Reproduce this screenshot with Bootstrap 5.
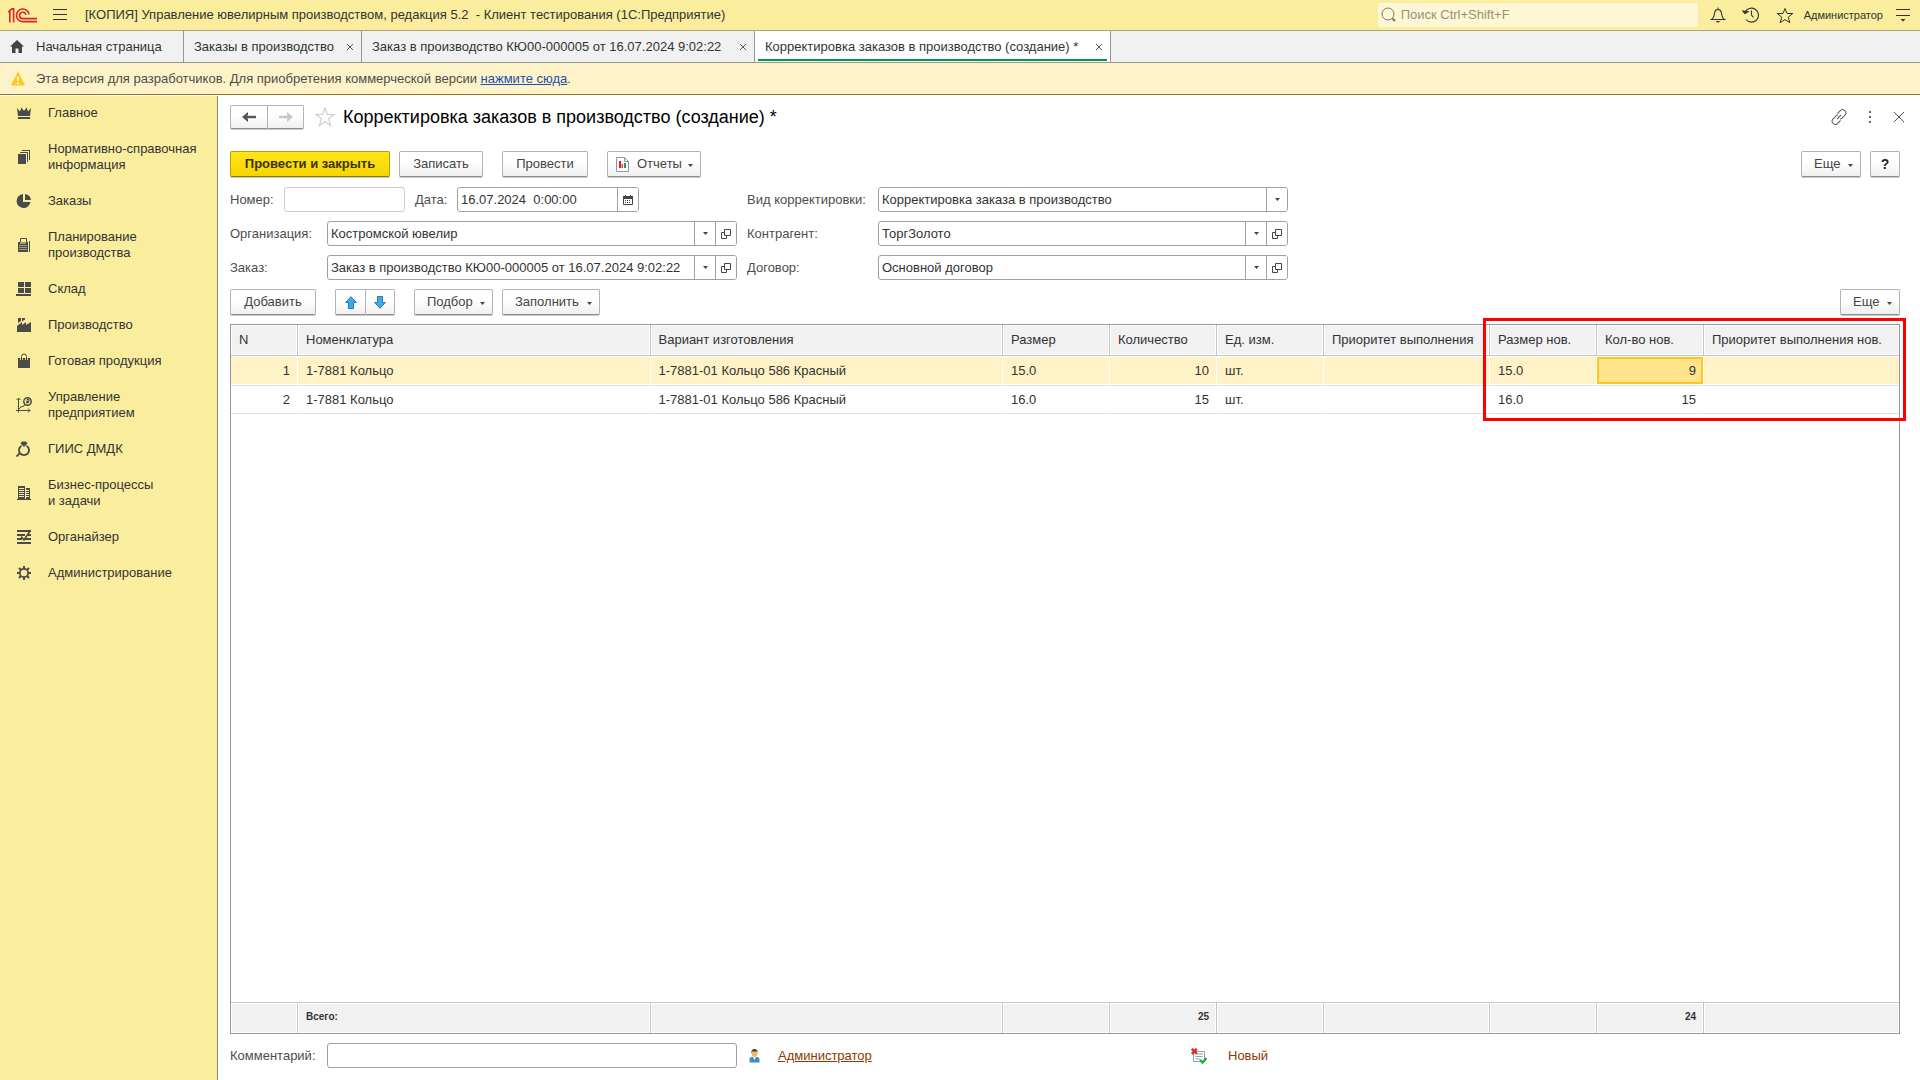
<!DOCTYPE html>
<html lang="ru">
<head>
<meta charset="utf-8">
<meta name="viewport" content="width=device-width, initial-scale=1">
<title>Корректировка заказов в производство</title>
<link href="https://cdn.jsdelivr.net/npm/bootstrap@5.3.0/dist/css/bootstrap.min.css" rel="stylesheet">
<style>
:root{--ink:#333;--ink2:#4d4d4d;--line:#a0a0a0;--sun:#fbed9e}
html,body{height:100%}
body{font-family:"Liberation Sans",Arial,sans-serif;font-size:13px;line-height:16px;color:var(--ink);background:#fff}
svg{display:block;flex:none}
.bare{border:0;background:none;padding:0;color:var(--ink)}
/* top bar */
.topbar{height:31px;background:var(--sun);border-bottom:1px solid #aca56e;padding:0 10px 0 8px}
.apptitle{margin-left:18px;white-space:pre}
.finder{width:320px;height:24px;background:#fdf7d6;border-radius:2px;padding-left:3px}
.finder input{border:0;background:none;outline:0;padding:0;width:100%;font-size:13px;line-height:22px;color:#333}
.finder input::placeholder{color:#97917a;opacity:1}
.tools{gap:16px;margin-left:12px}
.username{font-size:11px;margin:0 13px 0 10px}
/* tabs */
.tabs{height:32px;background:#f1f1f1;border-bottom:1px solid #979797}
.tabitem{border-right:1px solid #979797;padding:0 7px 0 10px;color:var(--ink);text-decoration:none;position:relative;white-space:nowrap;display:flex;align-items:center;justify-content:space-between;gap:8px}
.tabitem.home{min-width:184px;justify-content:flex-start;gap:12px}
.tabitem.list{min-width:178px}
.tabitem.doc{min-width:393px}
.tabitem.current{min-width:356px;background:#fff}
.tabitem.current::after{content:"";position:absolute;left:3px;right:3px;bottom:1px;height:2px;background:#00964b}
.notice{height:32px;background:#fef3c8;border-bottom:1px solid #93771b;padding-left:10px;color:#4d4d4d;gap:10px}
.notice a{color:#1d4fae}
/* sections */
.lower{min-height:0}
.side{width:218px;flex:none;background:var(--sun);border-right:1px solid #8f8a5c;margin-top:1px}
.side a{padding:10px 10px 10px 16px;gap:16px;color:var(--ink);text-decoration:none;display:flex;align-items:center}
.side a:first-child{padding-top:9px}
.side svg{color:#4a4a4a}
/* document */
.work{padding:10px 20px 12px 12px;min-width:0}
.titlerow{height:24px;gap:8px}
.starbtn{margin-left:3px}
.doctitle{font-size:18px;line-height:24px;color:#000;font-weight:400;margin:0}
.wintools{gap:21px;margin-right:-5px}
.cmdrow{margin-top:22px}
.formrow{margin-top:10px}
.listrow{margin-top:9px}
.ubtn{height:26px;border:1px solid #b3b3b3;border-bottom-color:#8f8f8f;border-radius:2px;background:linear-gradient(#fff,#fff 40%,#f0f0f0);box-shadow:0 1px 0 #c8c8c8;color:#444;padding:0 12px;display:inline-flex;align-items:center;justify-content:center;font-size:13px;line-height:16px;white-space:nowrap}
.ubtn.drop{padding:0 7px 0 12px;gap:5px;justify-content:space-between}
.ubtn.drop .tri{margin-top:3px}
.ubtn.gold{font-weight:700;background:linear-gradient(#ffe51a,#f6d500);border-color:#b8a000;border-bottom-color:#8f7c00;color:#3a3300;min-width:160px}
.w-save{min-width:84px}
.w-post{min-width:86px}
.w-pick{min-width:79px}
.w-fill{min-width:98px}
.w-more{min-width:60px}
.ubtn.w-rep{min-width:94px;padding-left:8px}
.w-rep>span{display:flex;align-items:center;gap:8px}
.ubtn.ask{width:30px;padding:0;font-size:14px;font-weight:700;color:#222}
.near{margin-left:9px}
.apart{margin-left:19px}
.pair .ubtn{padding:0;border-radius:0 2px 2px 0}
.pair .ubtn:first-child{border-right:0;border-radius:2px 0 0 2px}
.nav2 .ubtn{width:37px;height:24px}
.move .ubtn{width:30px}
/* fields */
.lab{color:#4d4d4d;white-space:nowrap;flex:none}
.lab-l{width:97px}
.lab-r{width:131px}
.lab-num{width:54px}
.lab-date{width:52px;padding-left:10px}
.box{height:25px;border:1px solid var(--line);border-radius:3px;background:#fff;display:flex;min-width:0;overflow:hidden}
.box.num{width:121px;border-color:#ccc}
.box.date{width:182px}
.box.wide{width:410px}
.box input,.box select{border:0;outline:0;background:none;appearance:none;padding:0 3px;flex:1;min-width:0;width:100%;color:#333;font-size:13px;line-height:16px}
.box button,.box .selmark{border:0;border-left:1px solid var(--line);background:#fff;width:21px;padding:0;display:flex;align-items:center;justify-content:center;flex:none;color:#444}
.formcol{width:507px;display:flex;flex-direction:column;gap:9px}
.formcol.right{width:541px;margin-left:10px}
.frow{display:flex;align-items:center}
/* goods table */
.gridbox{flex:1 1 0;min-height:0;border:1px solid #979797;position:relative;margin:9px 0}
.goods{width:100%;height:100%;table-layout:fixed;border-collapse:separate;border-spacing:0}
.c-n{width:67px}.c-s{width:107px}.c-p{width:166px}.c-pn{width:195px}
.goods th,.goods td{padding:0 7px 0 8px;font-weight:400;white-space:nowrap;overflow:hidden}
.goods thead th{height:31px;background:#f1f1f1;border-right:1px solid #c6c6c6;border-bottom:1px solid #c6c6c6;box-shadow:inset 0 0 0 1px #fff}
.goods tfoot td{height:31px;background:#f1f1f1;border-right:1px solid #c6c6c6;border-top:1px solid #c6c6c6;box-shadow:inset 0 0 0 1px #fff;font-size:10px;font-weight:700;padding-bottom:3px}
.goods .line td{height:28px;border-bottom:1px solid #e0e0e0;border-right:1px solid #fff}
.goods .picked td{height:30px;background:#fef2c6;border-top:1px solid #fff;box-shadow:inset 0 -1px 0 #fff}
.goods .picked td.cell{background:#ffe48d;box-shadow:inset 0 -1px 0 #fff,inset 0 -3px 0 #fcc61e,inset 2px 2px 0 #fcc61e,inset -2px 0 0 #fcc61e}
.goods tr>:last-child{border-right:0}
.callout{position:absolute;top:-7px;right:-7px;width:423px;height:103px;border:3px solid #fe0000;pointer-events:none}
.brown{color:#8a3a00}
.person{margin-left:12px}
.auth{margin-left:18px;width:413px}
.state{margin-left:21px}
</style>
<script src="https://cdn.jsdelivr.net/npm/bootstrap@5.3.0/dist/js/bootstrap.bundle.min.js"></script>
</head>
<body class="d-flex flex-column vh-100 overflow-hidden">
<svg width="0" height="0" class="position-absolute" aria-hidden="true">
  <symbol id="tri" viewBox="0 0 5 3"><path d="M0 0h5L2.500 3z" fill="currentColor"/></symbol>
  <symbol id="open" viewBox="0 0 10 10"><path d="M3.500.5h6v6h-6zM3 3.500H.5v6h5V7" fill="none" stroke="currentColor"/></symbol>
  <symbol id="cross" viewBox="0 0 8 8"><path d="M1 1l6 6M7 1l-6 6" fill="none" stroke="#555"/></symbol>
</svg>

<header class="topbar d-flex align-items-center flex-shrink-0">
  <svg width="29" height="15" viewBox="0 0 29 15" fill="none" stroke="#dc2328" stroke-width="1.600"><path d="M0 3.800h1.800V14.500M1 3L4.200.9H5.600V14.500M21 6.500A6.300 6.300 0 1 0 14.800 13.600H29M17.900 6.900A3.200 3.200 0 1 0 14.800 10.600H29"/></svg>
  <button class="bare ms-3" aria-label="Меню"><svg width="14" height="12" viewBox="0 0 14 12"><path d="M0 .5h14M0 5.500h14M0 10.500h14" stroke="#333"/></svg></button>
  <div class="apptitle">[КОПИЯ] Управление ювелирным производством, редакция 5.2  - Клиент тестирования (1С:Предприятие)</div>
  <div class="finder d-flex align-items-center ms-auto">
    <svg width="16" height="16" viewBox="0 0 16 16" fill="none" stroke="#7d7866"><circle cx="7" cy="7" r="6"/><path d="M11.500 11.500l2.500 2.500" stroke-width="2.200"/></svg>
    <input type="text" aria-label="Поиск" placeholder="Поиск Ctrl+Shift+F" class="ms-1">
  </div>
  <div class="tools d-flex align-items-center">
    <button class="bare" aria-label="Уведомления"><svg width="16" height="16" viewBox="0 0 16 16" fill="none" stroke="#333" stroke-width="1.100"><path d="M1.500 12.500h13c-2.500-1.500-2.700-4-3.200-7C11 3.500 9.700 2.500 8 2.500S5 3.500 4.700 5.500c-.5 3-.7 5.500-3.200 7zM8 .5v2"/><path d="M5.500 14h5L8 15.800z" fill="#333" stroke="none"/></svg></button>
    <button class="bare" aria-label="История"><svg width="18" height="16" viewBox="0 0 18 16" fill="none" stroke="#333" stroke-width="1.100"><path d="M3 5.500A7 7 0 1 1 4 12.500"/><path d="M.8 4l2 2.500L6 4.800z" fill="#333"/><path d="M9.500 3.500V8l2 2.500"/></svg></button>
    <button class="bare" aria-label="Избранное"><svg width="18" height="17" viewBox="0 0 18 17" fill="none" stroke="#333"><path d="M9 1.500l2 5h5.800l-4.600 3.700 1.700 5.500L9 12.600l-4.900 3.100 1.700-5.500L1.200 6.500H7z"/></svg></button>
  </div>
  <span class="username">Администратор</span>
  <button class="bare" aria-label="Параметры"><svg width="14" height="13" viewBox="0 0 14 13"><path d="M0 .5h14M0 6.500h14" stroke="#333"/><path d="M4.500 10h5L7 12.600z" fill="#333"/></svg></button>
</header>

<nav class="tabs d-flex flex-shrink-0" aria-label="Окна">
  <a href="#" class="tabitem home"><svg width="14" height="13" viewBox="0 0 14 13" fill="#444"><path d="M7 0l7 6.500h-2V13H8.500V8.500h-3V13H2V6.500H0z"/></svg><span>Начальная страница</span></a>
  <a href="#" class="tabitem list"><span>Заказы в производство</span><svg width="8" height="8"><use href="#cross"/></svg></a>
  <a href="#" class="tabitem doc"><span>Заказ в производство КЮ00-000005 от 16.07.2024 9:02:22</span><svg width="8" height="8"><use href="#cross"/></svg></a>
  <a href="#" class="tabitem current" aria-current="page"><span>Корректировка заказов в производство (создание) *</span><svg width="8" height="8"><use href="#cross"/></svg></a>
</nav>

<div class="notice d-flex align-items-center flex-shrink-0">
  <svg width="16" height="15" viewBox="0 0 16 15"><path d="M8 1.500L14.500 14H1.500z" fill="#fcc921" stroke="#fcc921" stroke-linejoin="round"/><path d="M8 5.500V10M8 11.200V13" stroke="#fff" stroke-width="1.600"/></svg>
  <span>Эта версия для разработчиков. Для приобретения коммерческой версии <a href="#">нажмите сюда</a>.</span>
</div>

<div class="lower d-flex flex-grow-1">
  <nav class="side d-flex flex-column" aria-label="Разделы">
    <a href="#"><svg width="16" height="16" viewBox="0 0 16 16" fill="currentColor"><path d="M1 3l3 3.500L5.500 2.500 8 6l2.500-3.500L12 6.500 15 3l-1 8H2zM2 12h12v2H2z"/></svg><span>Главное</span></a>
    <a href="#"><svg width="16" height="16" viewBox="0 0 16 16" fill="currentColor"><path d="M2 5h8v10H2zM4 3h8v10h-1V4H4zM6 1h8v10h-1V2H6z"/></svg><span>Нормативно-справочная<br>информация</span></a>
    <a href="#"><svg width="16" height="16" viewBox="0 0 16 16" fill="currentColor"><path d="M7 1v8h7.500A7 7 0 1 1 7 1zM9 1a7 7 0 0 1 6 6H9z"/></svg><span>Заказы</span></a>
    <a href="#"><svg width="16" height="16" viewBox="0 0 16 16"><path d="M4.500 5V1.500h6V5" fill="none" stroke="currentColor"/><path d="M2 5h10v10H2zM13 4h1v11h-1z" fill="currentColor"/><path d="M3.500 8.500h7M3.500 10.500h7M3.500 12.500h7" stroke="#fbed9e" stroke-dasharray="1 1"/><path d="M4 6h6" stroke="#fbed9e"/></svg><span>Планирование<br>производства</span></a>
    <a href="#"><svg width="16" height="16" viewBox="0 0 16 16" fill="currentColor"><path d="M2 1h6v5H2zM9 1h6v5H9zM2 7h6v5H2zM9 7h6v5H9zM0 13h15v2H0z"/></svg><span>Склад</span></a>
    <a href="#"><svg width="16" height="16" viewBox="0 0 16 16" fill="currentColor"><path d="M2 1h3v3L2 6zM6 1h3v1.500L6 4.500zM1 9l5-4v3l4-3v3l5-3v10H1z"/></svg><span>Производство</span></a>
    <a href="#"><svg width="16" height="16" viewBox="0 0 16 16"><path d="M2 5h12v10H2z" fill="currentColor"/><path d="M5.500 7V3.500a2.500 2.500 0 0 1 5 0V7" fill="none" stroke="#fbed9e" stroke-width="2.500"/><path d="M5.500 7V3.500a2.500 2.500 0 0 1 5 0V7" fill="none" stroke="currentColor"/></svg><span>Готовая продукция</span></a>
    <a href="#"><svg width="16" height="16" viewBox="0 0 16 16" fill="none" stroke="currentColor"><path d="M2.500 1v14.500M.5 3l2-2 2 2M0 13.500h14M12 11.500l2 2-2 2M3 12l2-2 3-1 1-2"/><circle cx="11.500" cy="4.500" r="3.700" stroke-width="1.500"/><path d="M11 2.500v4M11 2.500h2v2h-2M10 5.500h3"/></svg><span>Управление<br>предприятием</span></a>
    <a href="#"><svg width="16" height="16" viewBox="0 0 16 16" fill="none" stroke="currentColor" stroke-width="1.800"><path d="M5.500 4.800a5 5 0 1 0 5 0M4 12L.5 15.500"/><path d="M6 .5h4l1.500 2L8 6 4.500 2.500z" fill="currentColor" stroke="none"/></svg><span>ГИИС ДМДК</span></a>
    <a href="#"><svg width="16" height="16" viewBox="0 0 16 16"><path d="M2 1h7v13H2zM10 3h4v11h-4zM1 14h14v1H1z" fill="currentColor"/><path d="M3 3.500h5M3 5.500h5M3 7.500h5M3 9.500h5M3 11.500h5M10 5.500h3M10 7.500h3M10 9.500h3M10 11.500h3" stroke="#fbed9e"/></svg><span>Бизнес-процессы<br>и задачи</span></a>
    <a href="#"><svg width="16" height="16" viewBox="0 0 16 16" fill="none" stroke="currentColor" stroke-width="2"><path d="M1 2h14M1 6h8M12 6h3M1 10h5M9 10h6M1 14h14"/><path d="M5 7.500l3 3.500 6-9" stroke-width="1.600"/></svg><span>Органайзер</span></a>
    <a href="#"><svg width="16" height="16" viewBox="0 0 16 16" fill="none" stroke="currentColor"><circle cx="8" cy="8" r="4.200" stroke-width="1.800"/><path d="M8 1v2.500M8 12.500V15M1 8h2.500M12.500 8H15M3 3l2 2M11 11l2 2M13 3l-2 2M5 11l-2 2" stroke-width="2"/></svg><span>Администрирование</span></a>
  </nav>

  <main class="work d-flex flex-column flex-grow-1">
    <div class="titlerow d-flex align-items-center">
      <div class="pair nav2 d-flex">
        <button class="ubtn" aria-label="Назад"><svg width="14" height="10" viewBox="0 0 14 10"><path d="M14 5H3" stroke="#555" stroke-width="2.400"/><path d="M0 5L6 0v3L4 5l2 2v3z" fill="#555"/></svg></button>
        <button class="ubtn" aria-label="Вперед"><svg width="14" height="10" viewBox="0 0 14 10"><path d="M0 5h11" stroke="#c8c8c8" stroke-width="2.400"/><path d="M14 5L8 0v3l2 2-2 2v3z" fill="#c8c8c8"/></svg></button>
      </div>
      <button class="bare starbtn" aria-label="В избранное"><svg width="20" height="20" viewBox="0 0 20 20" fill="none" stroke="#d0d0d0" stroke-width="1.200"><path d="M10 1l2.300 6.300 6.700.2-5.300 4.100 1.900 6.900L10 14.700l-5.600 3.800 1.900-6.900L1 7.500l6.700-.2z"/></svg></button>
      <h1 class="doctitle">Корректировка заказов в производство (создание) *</h1>
      <div class="wintools d-flex align-items-center ms-auto">
        <button class="bare" aria-label="Ссылка"><svg width="16" height="16" viewBox="0 0 16 16" fill="none" stroke="#666" stroke-width="1.100"><path d="M6.500 4.500l2.800-2.800a3 3 0 0 1 4.600 4.500L11 9.200a3 3 0 0 1-2 .8M9.500 11.500l-2.800 2.800a3 3 0 0 1-4.600-4.500L5 6.800A3 3 0 0 1 7 6M6 10l4-4"/></svg></button>
        <button class="bare" aria-label="Еще действия"><svg width="4" height="12" viewBox="0 0 4 12" fill="#666"><path d="M1 0h2v2H1zM1 5h2v2H1zM1 10h2v2H1z"/></svg></button>
        <button class="bare" aria-label="Закрыть"><svg width="12" height="12" viewBox="0 0 12 12"><path d="M1 1l10 10M11 1L1 11" stroke="#555"/></svg></button>
      </div>
    </div>

    <div class="cmdrow d-flex">
      <button class="ubtn gold">Провести и закрыть</button>
      <button class="ubtn w-save near">Записать</button>
      <button class="ubtn w-post apart">Провести</button>
      <button class="ubtn drop w-rep apart"><span><svg width="13" height="15" viewBox="0 0 13 15"><path d="M.5.5h8l4 4v10H.5z" fill="#fff" stroke="#8698ac"/><path d="M8.500.5v4h4" fill="none" stroke="#8698ac"/><path d="M3 4h2v7H3z" fill="#e02020"/><path d="M5.500 7h1.500v4H5.500z" fill="#d25b20"/><path d="M8 6h2v5H8z" fill="#23a03a"/></svg>Отчеты</span><svg class="tri" width="5" height="3"><use href="#tri"/></svg></button>
      <button class="ubtn drop w-more ms-auto"><span>Еще</span><svg class="tri" width="5" height="3"><use href="#tri"/></svg></button>
      <button class="ubtn ask near">?</button>
    </div>

    <div class="formrow d-flex">
      <div class="formcol">
        <div class="frow">
          <label class="lab lab-num" for="num">Номер:</label>
          <div class="box num"><input id="num" type="text"></div>
          <label class="lab lab-date" for="date">Дата:</label>
          <div class="box date"><input id="date" type="text" value="16.07.2024  0:00:00"><button aria-label="Календарь"><svg width="10" height="10" viewBox="0 0 10 10"><path d="M.5 2.500h9v7h-9z" fill="#fff" stroke="#444"/><path d="M0 1h10v3H0zM2 0h1v1H2zM7 0h1v1H7z" fill="#444"/><path d="M2 5.500h6M2 7.500h6" stroke="#444" stroke-dasharray="1 1"/></svg></button></div>
        </div>
        <div class="frow">
          <label class="lab lab-l" for="org">Организация:</label>
          <div class="box flex-grow-1"><input id="org" type="text" value="Костромской ювелир"><button aria-label="Выбрать"><svg width="5" height="3"><use href="#tri"/></svg></button><button aria-label="Открыть"><svg width="10" height="10"><use href="#open"/></svg></button></div>
        </div>
        <div class="frow">
          <label class="lab lab-l" for="order">Заказ:</label>
          <div class="box flex-grow-1"><input id="order" type="text" value="Заказ в производство КЮ00-000005 от 16.07.2024 9:02:22"><button aria-label="Выбрать"><svg width="5" height="3"><use href="#tri"/></svg></button><button aria-label="Открыть"><svg width="10" height="10"><use href="#open"/></svg></button></div>
        </div>
      </div>
      <div class="formcol right">
        <div class="frow">
          <label class="lab lab-r" for="kind">Вид корректировки:</label>
          <div class="box flex-grow-1"><select id="kind"><option>Корректировка заказа в производство</option></select><span class="selmark"><svg width="5" height="3"><use href="#tri"/></svg></span></div>
        </div>
        <div class="frow">
          <label class="lab lab-r" for="agent">Контрагент:</label>
          <div class="box flex-grow-1"><input id="agent" type="text" value="ТоргЗолото"><button aria-label="Выбрать"><svg width="5" height="3"><use href="#tri"/></svg></button><button aria-label="Открыть"><svg width="10" height="10"><use href="#open"/></svg></button></div>
        </div>
        <div class="frow">
          <label class="lab lab-r" for="deal">Договор:</label>
          <div class="box flex-grow-1"><input id="deal" type="text" value="Основной договор"><button aria-label="Выбрать"><svg width="5" height="3"><use href="#tri"/></svg></button><button aria-label="Открыть"><svg width="10" height="10"><use href="#open"/></svg></button></div>
        </div>
      </div>
    </div>

    <div class="listrow d-flex">
      <button class="ubtn w-post">Добавить</button>
      <div class="pair move apart d-flex">
        <button class="ubtn" aria-label="Вверх"><svg width="12" height="13" viewBox="0 0 12 13"><path d="M6 .7L11.300 6.500H8.500v6h-5v-6H.7z" fill="#3fa9ea" stroke="#1f7ab8"/></svg></button>
        <button class="ubtn" aria-label="Вниз"><svg width="12" height="13" viewBox="0 0 12 13"><path d="M6 12.300L.7 6.500h2.800v-6h5v6h2.800z" fill="#3fa9ea" stroke="#1f7ab8"/></svg></button>
      </div>
      <button class="ubtn drop w-pick apart"><span>Подбор</span><svg class="tri" width="5" height="3"><use href="#tri"/></svg></button>
      <button class="ubtn drop w-fill near"><span>Заполнить</span><svg class="tri" width="5" height="3"><use href="#tri"/></svg></button>
      <button class="ubtn drop w-more ms-auto"><span>Еще</span><svg class="tri" width="5" height="3"><use href="#tri"/></svg></button>
    </div>

    <div class="gridbox">
      <table class="goods">
        <colgroup><col class="c-n"><col><col><col class="c-s"><col class="c-s"><col class="c-s"><col class="c-p"><col class="c-s"><col class="c-s"><col class="c-pn"></colgroup>
        <thead><tr><th>N</th><th>Номенклатура</th><th>Вариант изготовления</th><th>Размер</th><th>Количество</th><th>Ед. изм.</th><th>Приоритет выполнения</th><th>Размер нов.</th><th>Кол-во нов.</th><th>Приоритет выполнения нов.</th></tr></thead>
        <tbody>
          <tr class="line picked"><td class="text-end">1</td><td>1-7881 Кольцо</td><td>1-7881-01 Кольцо 586 Красный</td><td>15.0</td><td class="text-end">10</td><td>шт.</td><td></td><td>15.0</td><td class="text-end cell">9</td><td></td></tr>
          <tr class="line"><td class="text-end">2</td><td>1-7881 Кольцо</td><td>1-7881-01 Кольцо 586 Красный</td><td>16.0</td><td class="text-end">15</td><td>шт.</td><td></td><td>16.0</td><td class="text-end">15</td><td></td></tr>
          <tr><td colspan="10"></td></tr>
        </tbody>
        <tfoot><tr><td></td><td>Всего:</td><td></td><td></td><td class="text-end">25</td><td></td><td></td><td></td><td class="text-end">24</td><td></td></tr></tfoot>
      </table>
      <div class="callout"></div>
    </div>

    <div class="d-flex align-items-center">
      <label class="lab lab-l" for="note">Комментарий:</label>
      <div class="box wide"><input id="note" type="text"></div>
      <svg class="person" width="11" height="14" viewBox="0 0 11 14"><path d="M.5 13.500V10Q.5 8 3 8h5q2.500 0 2.500 2v3.500z" fill="#3a8fc4"/><path d="M4 8l1.500 3L7 8z" fill="#fff"/><ellipse cx="5.500" cy="4.500" rx="2.800" ry="3.500" fill="#f0b968"/><path d="M2.300 4.500C2 1 4 0 5.500 0S9 1 8.700 4.500L8 2.500H3z" fill="#5a3d1c"/></svg>
      <div class="auth"><a href="#" class="brown">Администратор</a></div>
      <svg width="16" height="16" viewBox="0 0 16 16"><path d="M2.500 3.500h11v10h-11z" fill="#fff" stroke="#8fa0b4"/><path d="M6 6h6M4.500 8.500h7M4.500 11h5" stroke="#8fa0b4"/><path d="M.8.8l5 5M5.800.8l-5 5" stroke="#dc2a2a" stroke-width="2.400"/><path d="M9 12l2.500 2.500 4-4.500" fill="none" stroke="#1fae3a" stroke-width="2.400"/></svg>
      <span class="brown state">Новый</span>
    </div>
  </main>
</div>
</body>
</html>
